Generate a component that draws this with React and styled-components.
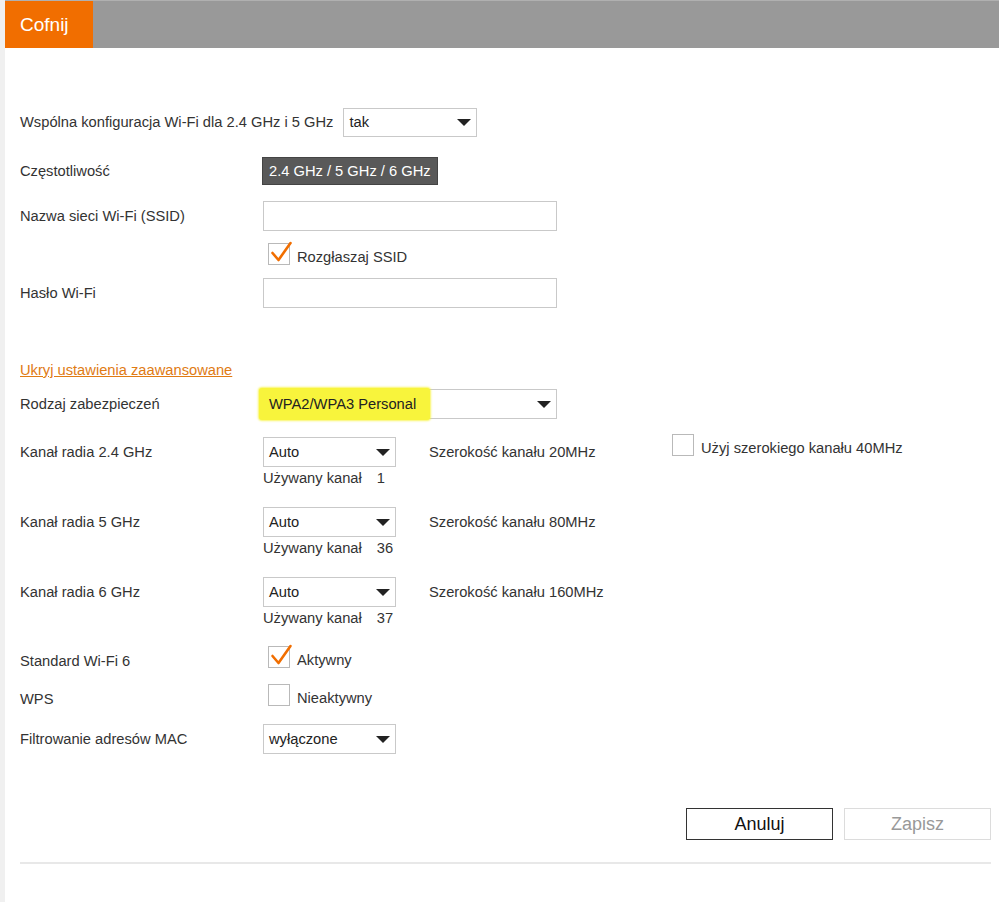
import React from 'react';
import styled, { createGlobalStyle } from 'styled-components';

const GlobalStyle = createGlobalStyle`
  body {
    margin: 0;
    background: #fff;
    font-family: "Liberation Sans", Arial, sans-serif;
    color: #333;
  }
`;

const Page = styled.div`
  min-height: 902px;
  border-left: 5px solid #f0f0f0;
  box-sizing: border-box;
`;

const Header = styled.div`
  height: 48px;
  display: flex;
  background: #999;
  border-top: 1px solid #b0b0b0;
  box-sizing: border-box;
`;

const BackButton = styled.div`
  width: 88px;
  padding-left: 15px;
  box-sizing: border-box;
  background: #f16e00;
  color: #fff;
  font-size: 19px;
  display: flex;
  align-items: center;
`;

const Content = styled.div`
  padding: 0 8px 0 15px;
  display: flex;
  flex-direction: column;
  font-size: 14.7px;
`;

const Row = styled.div`
  display: grid;
  grid-template-columns: 243px auto 1fr;
  align-items: center;
  margin-top: ${({ $mt }) => $mt}px;
  height: ${({ $h }) => $h}px;
`;

const InlineRow = styled.div`
  display: flex;
  align-items: center;
  gap: 10px;
  margin-top: ${({ $mt }) => $mt}px;
  height: 28px;
`;

const ChannelRow = styled.div`
  display: grid;
  grid-template-columns: 243px 166px 243px 1fr;
  align-items: start;
  margin-top: ${({ $mt }) => $mt}px;
`;

const Label = styled.div`
  line-height: ${({ $lh }) => ($lh ? `${$lh}px` : 'normal')};
  padding-top: ${({ $shift }) => ($shift ? '9px' : '0')};
`;

const SelectBox = styled.div`
  position: relative;
  width: ${({ $w }) => $w}px;
  height: ${({ $h }) => $h || 30}px;
  border: 1px solid #c9c9c9;
  box-sizing: border-box;
  background: #fff;
  display: flex;
  align-items: center;
  padding-left: 5px;
  color: #222;
`;

const Arrow = styled.span`
  position: absolute;
  right: 5px;
  top: 50%;
  margin-top: -3px;
  width: 0;
  height: 0;
  border-left: 7px solid transparent;
  border-right: 7px solid transparent;
  border-top: 7px solid #222;
`;

const Highlight = styled.span`
  display: inline-flex;
  align-items: center;
  height: 32px;
  margin-left: -10px;
  padding: 0 14px 0 10px;
  background: #f8f43c;
  border-radius: 3px;
  box-shadow: 0 0 2px 1px rgba(248, 244, 60, 0.8);
`;

const FreqBadge = styled.div`
  width: 176px;
  height: 28px;
  margin-left: -1px;
  background: #595959;
  border: 1px solid #444;
  box-sizing: border-box;
  color: #fff;
  display: flex;
  align-items: center;
  padding-left: 6px;
`;

const TextInput = styled.div`
  width: 294px;
  height: 30px;
  border: 1px solid #c9c9c9;
  box-sizing: border-box;
  background: #fff;
`;

const CheckWrap = styled.div`
  display: flex;
  align-items: center;
  gap: 7px;
  padding-left: 5px;
`;

const Box = styled.span`
  position: relative;
  width: 22px;
  height: 22px;
  border: 1px solid #b9b9b9;
  box-sizing: border-box;
  background: #fff;
  flex-shrink: 0;
  svg {
    position: absolute;
    left: 1px;
    top: -3px;
  }
`;

const CheckText = styled.span`
  line-height: 16px;
  padding-top: 6px;
`;

const ExtraCell = styled.div`
  margin-left: -5px;
  margin-top: -3px;
`;

const LinkText = styled.a`
  color: #e07b14;
  text-decoration: underline;
  line-height: 18px;
  margin-top: 53px;
  cursor: pointer;
`;

const Used = styled.div`
  margin-top: 3px;
  line-height: 16px;
  display: flex;
  gap: 15px;
`;

const Actions = styled.div`
  display: flex;
  justify-content: flex-end;
  gap: 11px;
  margin-top: 54px;
`;

const Button = styled.button`
  width: 147px;
  height: 32px;
  background: #fff;
  border: 1px solid ${({ $disabled }) => ($disabled ? '#dcdcdc' : '#333')};
  color: ${({ $disabled }) => ($disabled ? '#999' : '#111')};
  font-family: "Liberation Sans", Arial, sans-serif;
  font-size: 18px;
  padding: 0;
`;

const Divider = styled.hr`
  margin: 22px 0 0 0;
  border: none;
  height: 2px;
  background: #e8e8e8;
`;

const Checkbox = ({ checked, children }) => (
  <CheckWrap>
    <Box>
      {checked && (
        <svg width="24" height="22" viewBox="0 0 24 22">
          <path d="M2.5 12 L8.5 19 L20.5 2" fill="none" stroke="#f16e00" strokeWidth="2.6" strokeLinecap="round" strokeLinejoin="round" />
        </svg>
      )}
    </Box>
    <CheckText>{children}</CheckText>
  </CheckWrap>
);

const Select = ({ width, height, children }) => (
  <SelectBox $w={width} $h={height}>
    {children}
    <Arrow />
  </SelectBox>
);

const channels = [
  { label: 'Kanał radia 2.4 GHz', width: 'Szerokość kanału 20MHz', used: '1', extra: true, mt: 18 },
  { label: 'Kanał radia 5 GHz', width: 'Szerokość kanału 80MHz', used: '36', mt: 21 },
  { label: 'Kanał radia 6 GHz', width: 'Szerokość kanału 160MHz', used: '37', mt: 21 },
];

export default function App() {
  return (
    <Page>
      <GlobalStyle />
      <Header>
        <BackButton>Cofnij</BackButton>
      </Header>
      <Content>
        <InlineRow $mt={60}>
          <Label>Wspólna konfiguracja Wi-Fi dla 2.4 GHz i 5 GHz</Label>
          <Select width={134} height={29}>tak</Select>
        </InlineRow>

        <Row $mt={21} $h={28}>
          <Label>Częstotliwość</Label>
          <FreqBadge>2.4 GHz / 5 GHz / 6 GHz</FreqBadge>
        </Row>

        <Row $mt={16} $h={30}>
          <Label>Nazwa sieci Wi-Fi (SSID)</Label>
          <TextInput />
        </Row>

        <Row $mt={12} $h={22}>
          <span />
          <Checkbox checked>Rozgłaszaj SSID</Checkbox>
        </Row>

        <Row $mt={13} $h={30}>
          <Label>Hasło Wi-Fi</Label>
          <TextInput />
        </Row>

        <LinkText>Ukryj ustawienia zaawansowane</LinkText>

        <Row $mt={10} $h={30}>
          <Label>Rodzaj zabezpieczeń</Label>
          <Select width={294}>
            <Highlight>WPA2/WPA3 Personal</Highlight>
          </Select>
        </Row>

        {channels.map((c) => (
          <ChannelRow key={c.label} $mt={c.mt}>
            <Label $lh={30}>{c.label}</Label>
            <div>
              <Select width={133}>Auto</Select>
              <Used>
                <span>Używany kanał</span>
                <span>{c.used}</span>
              </Used>
            </div>
            <Label $lh={30}>{c.width}</Label>
            {c.extra ? (
              <ExtraCell>
                <Checkbox>Użyj szerokiego kanału 40MHz</Checkbox>
              </ExtraCell>
            ) : (
              <span />
            )}
          </ChannelRow>
        ))}

        <Row $mt={18} $h={22}>
          <Label $shift>Standard Wi-Fi 6</Label>
          <Checkbox checked>Aktywny</Checkbox>
        </Row>

        <Row $mt={16} $h={22}>
          <Label $shift>WPS</Label>
          <Checkbox>Nieaktywny</Checkbox>
        </Row>

        <Row $mt={20} $h={30}>
          <Label>Filtrowanie adresów MAC</Label>
          <Select width={133}>wyłączone</Select>
        </Row>

        <Actions>
          <Button>Anuluj</Button>
          <Button $disabled>Zapisz</Button>
        </Actions>
        <Divider />
      </Content>
    </Page>
  );
}
